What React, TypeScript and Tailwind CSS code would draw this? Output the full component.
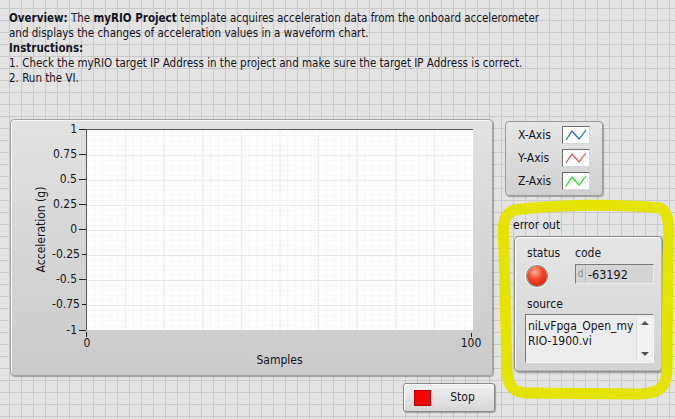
import React from 'react';

const yTicks = ['1', '0.75', '0.5', '0.25', '0', '-0.25', '-0.5', '-0.75', '-1'];

function PlotArea() {
  const w = 387;
  const h = 201;
  const majorX = Array.from({ length: 9 }, (_, i) => 1 + ((i + 1) * (w - 1)) / 10);
  const minorX = Array.from({ length: 50 }, (_, i) => 1 + (i * (w - 1)) / 50);
  const majorY = Array.from({ length: 7 }, (_, i) => 1 + (i + 1) * 25);
  const minorY = Array.from({ length: 40 }, (_, i) => 1 + i * 5);
  return (
    <svg width={w} height={h} className="block">
      <rect x={0} y={0} width={w} height={h} fill="#ffffff" />
      {minorX.map((x) => (
        <line key={'mx' + x} x1={x} y1={0} x2={x} y2={h} stroke="#f6f6f6" strokeWidth={1} />
      ))}
      {minorY.map((y) => (
        <line key={'my' + y} x1={0} y1={y + 0.5} x2={w} y2={y + 0.5} stroke="#f6f6f6" strokeWidth={1} />
      ))}
      {majorX.map((x) => (
        <line key={'X' + x} x1={x} y1={0} x2={x} y2={h} stroke="#eaeaea" strokeWidth={1} />
      ))}
      {majorY.map((y) => (
        <line key={'Y' + y} x1={0} y1={y + 0.5} x2={w} y2={y + 0.5} stroke="#eaeaea" strokeWidth={1} />
      ))}
      <line x1={0.5} y1={0} x2={0.5} y2={h} stroke="#5a5a5a" strokeWidth={1} />
      <line x1={0} y1={0.5} x2={w} y2={0.5} stroke="#5a5a5a" strokeWidth={1} />
    </svg>
  );
}

function Swatch({ color }: { color: string }) {
  return (
    <div className="w-[28px] h-[18px] bg-white border-t border-l border-[#6e6e6e] border-r border-b border-r-[#d8d8d8] border-b-[#d8d8d8]">
      <svg width={26} height={16} className="block">
        <polyline points="3,13 9,4 16,12 23,3" fill="none" stroke={color} strokeWidth={1.2} />
      </svg>
    </div>
  );
}

function Legend() {
  const rows: [string, string][] = [
    ['X-Axis', '#1f6cbd'],
    ['Y-Axis', '#f24848'],
    ['Z-Axis', '#22dd22'],
  ];
  return (
    <div className="mt-[2px] w-[98px] h-[75px] rounded-[4px] border border-[#9a9a9a] bg-linear-to-b from-[#e6e6e6] to-[#d0d0d0] shadow-[1px_1px_1px_rgba(0,0,0,0.3)] pt-[4px] pl-[12px] flex flex-col gap-[5px]">
      {rows.map(([label, color]) => (
        <div key={label} className="h-[18px] flex items-center">
          <span className="w-[44px] leading-[15px]">{label}</span>
          <Swatch color={color} />
        </div>
      ))}
    </div>
  );
}

function ErrorOut() {
  return (
    <div className="mt-[22px]">
      <div className="ml-[8px] leading-[15px]">error out</div>
      <div className="mt-[3px] ml-[9px] w-[149px] h-[136px] rounded-[5px] border border-[#8e8e8e] bg-linear-to-b from-[#e6e6e6] to-[#d2d2d2] shadow-[inset_1px_1px_0_#fbfbfb,inset_-1px_-1px_0_#b8b8b8,1px_1px_2px_rgba(0,0,0,0.35)]">
        <div className="flex pl-[12px] pt-[9px]">
          <div className="w-[48px]">
            <div className="leading-[15px]">status</div>
            <div className="mt-[5px] w-[20px] h-[20px] rounded-full bg-[radial-gradient(circle_at_40%_30%,#ffb39c_0%,#f4482a_40%,#d3240c_80%,#a81a08_100%)] shadow-[0_0_0_1px_#8a8a8a,0_0_0_2px_#f4f4f4]" />
          </div>
          <div>
            <div className="leading-[15px]">code</div>
            <div className="mt-[3px] w-[79px] h-[20px] flex items-center bg-[#d5d5d5] border-t border-l border-[#7c7c7c] border-r border-b border-r-[#ededed] border-b-[#ededed]">
              <span className="w-[10px] text-center text-[10px] text-[#8a8a8a] leading-[18px] border-r border-[#bdbdbd]">d</span>
              <span className="ml-[2px] leading-[15px] text-[12.5px]">-63192</span>
            </div>
          </div>
        </div>
        <div className="ml-[12px] mt-[11px] leading-[15px]">source</div>
        <div className="mt-[2px] ml-[10px] w-[129px] h-[49px] flex bg-[#ececec] border-t border-l border-[#7c7c7c] border-r border-b border-r-[#f4f4f4] border-b-[#f4f4f4]">
          <div className="flex-1 pl-[2px] pt-[4px] leading-[15px] text-[12px]">
            niLvFpga_Open_my
            <br />
            RIO-1900.vi
          </div>
          <div className="w-[16px] my-[2px] mr-[1px] flex flex-col justify-between items-center bg-[#f2f2f2] border-l border-[#dcdcdc] py-[3px]">
            <svg width={8} height={5} className="block">
              <polygon points="0,5 4,1 8,5" fill="#555" />
            </svg>
            <svg width={8} height={5} className="block">
              <polygon points="0,0 8,0 4,4" fill="#555" />
            </svg>
          </div>
        </div>
      </div>
    </div>
  );
}

export default function App() {
  return (
    <div className="relative w-[675px] h-[419px] overflow-hidden bg-[#e3e3e3] bg-[linear-gradient(to_right,#c9c9c9_1px,transparent_1px),linear-gradient(to_bottom,#c9c9c9_1px,transparent_1px)] bg-size-[12px_12px] bg-position-[9px_8px] font-['DejaVu_Sans_Condensed','Liberation_Sans',Arial,sans-serif] text-[11.5px] text-[#14141e]">
      <div className="pl-[9px] pt-[11px] leading-[15px]">
        <p>
          <b>Overview:</b> The <b>myRIO Project</b> template acquires acceleration data from the onboard accelerometer
        </p>
        <p>and displays the changes of acceleration values in a waveform chart.</p>
        <p>
          <b>Instructions:</b>
        </p>
        <p>1. Check the myRIO target IP Address in the project and make sure the target IP Address is correct.</p>
        <p>2. Run the VI.</p>
      </div>

      <div className="flex items-start pl-[10px] mt-[33px]">
        <div className="w-[483px]">
          <div className="w-[483px] h-[257px] rounded-[4px] border border-[#a4a4a4] bg-linear-to-b from-[#e2e2e2] to-[#cacaca] shadow-[inset_1px_1px_0_#f6f6f6,1px_1px_1px_rgba(0,0,0,0.3)] pt-[9px]">
            <div className="flex">
              <div className="ml-[21px] w-[20px] h-[201px] flex items-center justify-center">
                <span className="-rotate-90 whitespace-nowrap leading-[15px] text-[12px]">Acceleration (g)</span>
              </div>
              <div className="w-[34px] h-[201px] flex flex-col justify-between">
                {yTicks.map((t) => (
                  <div key={t} className="h-0 flex items-center justify-end">
                    <span className="leading-[15px] text-[12px]">{t}</span>
                    <span className="ml-[2px] w-[7px] h-px bg-[#222]" />
                  </div>
                ))}
              </div>
              <PlotArea />
            </div>
            <div className="relative ml-[75px] w-[387px] h-[23px] text-[12px]">
              <div className="absolute left-0 top-[2px] w-px h-[5px] bg-[#222]" />
              <div className="absolute left-[1px] top-[6px] -translate-x-1/2 leading-[15px]">0</div>
              <div className="absolute right-[1px] top-[3px] w-px h-[4px] bg-[#222]" />
              <div className="absolute right-[2px] top-[6px] translate-x-1/2 leading-[15px]">100</div>
            </div>
            <div className="ml-[75px] w-[387px] text-center leading-[15px] text-[12px]">Samples</div>
          </div>
          <button className="mt-[7px] ml-[393px] w-[92px] h-[29px] flex items-center rounded-[3px] border border-[#8a8a8a] bg-linear-to-b from-[#f2f2f2] to-[#d6d6d6] shadow-[inset_1px_1px_0_#ffffff,1px_1px_1px_rgba(0,0,0,0.3)] text-[12px]">
            <span className="ml-[10px] w-[17px] h-[16px] bg-[#ff0000] border border-[#b00000]" />
            <span className="flex-1 text-center leading-[15px]">Stop</span>
          </button>
        </div>
        <div className="ml-[12px] text-[12px]">
          <Legend />
          <ErrorOut />
        </div>
      </div>

      <svg className="absolute inset-0 pointer-events-none" width={675} height={419}>
        <path
          d="M 514 210 C 560 204, 620 204, 660 208 C 671 212, 669 232, 668 260 L 667 372 C 666 388, 659 393, 640 394 L 528 393 C 513 393, 508 386, 507 372 L 504 250 C 503 228, 501 216, 514 210 Z"
          fill="none"
          stroke="#e4e400"
          strokeWidth={11}
          strokeLinejoin="round"
        />
      </svg>
    </div>
  );
}
